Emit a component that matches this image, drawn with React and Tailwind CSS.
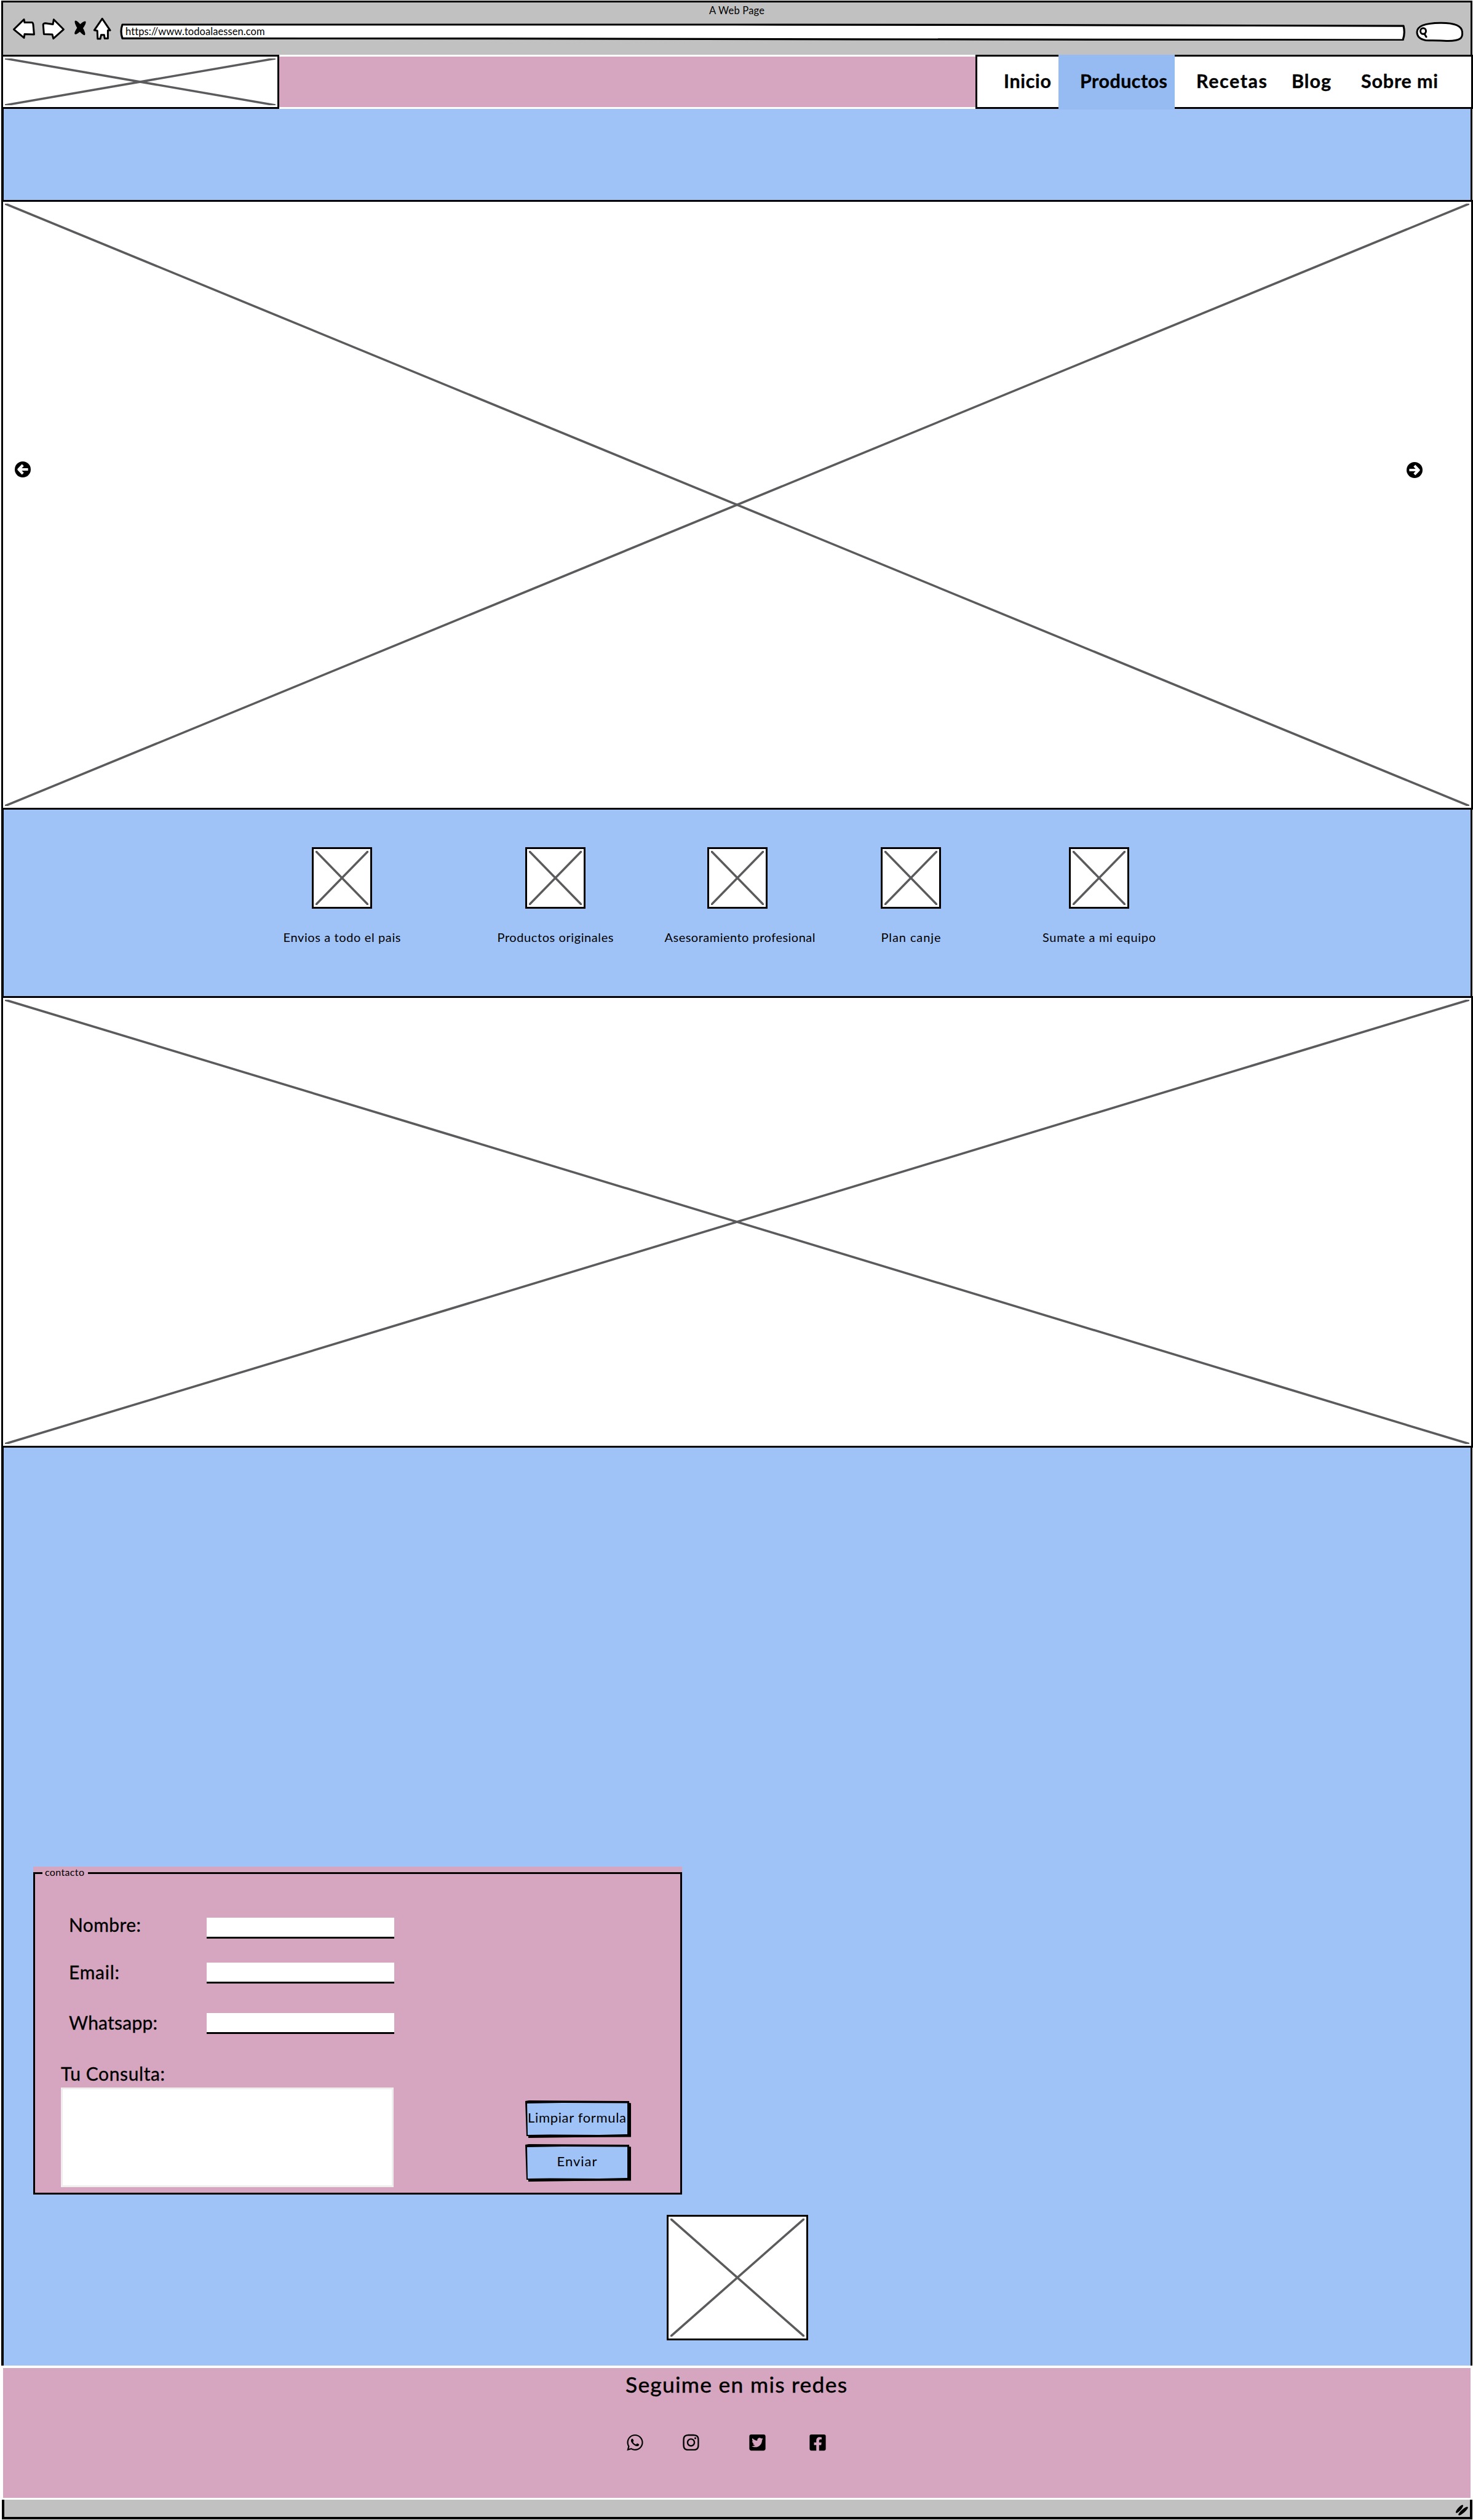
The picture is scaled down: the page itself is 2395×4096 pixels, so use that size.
import { useLayoutEffect, useRef, useState } from "react";
import { FaWhatsapp, FaInstagram, FaTwitterSquare, FaFacebookSquare } from "react-icons/fa";

/* A single line of text whose tracking is adjusted so that it spans `width`. */
function FitText({ width, className = "", children }) {
  const ref = useRef(null);
  const [spacing, setSpacing] = useState(0);
  useLayoutEffect(() => {
    const natural = ref.current.getBoundingClientRect().width;
    setSpacing((width - natural) / (children.length - 1));
  }, []);
  return (
    <span className={`block shrink-0 whitespace-nowrap leading-none ${className}`} style={{ width }}>
      <span ref={ref} className="inline-block" style={{ letterSpacing: spacing }}>
        {children}
      </span>
    </span>
  );
}

/* Bordered image placeholder with two diagonals. */
function Placeholder({ className = "", children }) {
  return (
    <div className={`relative shrink-0 border-[3px] border-black bg-white ${className}`}>
      <svg
        className="absolute left-[3px] top-[3px] h-[calc(100%-6px)] w-[calc(100%-6px)]"
        viewBox="0 0 100 100"
        preserveAspectRatio="none"
        stroke="#5b5b5d"
        strokeWidth="3.6"
      >
        <line x1="0" y1="0" x2="100" y2="100" vectorEffect="non-scaling-stroke" />
        <line x1="100" y1="0" x2="0" y2="100" vectorEffect="non-scaling-stroke" />
      </svg>
      {children}
    </div>
  );
}

function ArrowBadge({ className = "" }) {
  return (
    <svg className={`relative h-[26px] w-[26px] ${className}`} viewBox="0 0 124 124" fill="none">
      <circle cx="62" cy="62" r="62" fill="#000" />
      <path d="M21 62H86M61 29L93 62L61 95" stroke="#fff" strokeWidth="20" strokeLinejoin="round" />
    </svg>
  );
}

function BrowserBar() {
  return (
    <header className="ml-[2px] mr-px mt-px flex h-[88px] shrink-0 flex-col border-x-[3px] border-t-[3px] border-black bg-[#c1c1c1]">
      <FitText width={90} className="ml-[1148px] mt-[5px] text-[16.5px]">
        A Web Page
      </FitText>
      <div className="mt-[2.5px] flex items-start pl-[15px]">
        <svg className="h-[38px] w-[40px]" viewBox="0 0 40 38" fill="#fff" stroke="#000" strokeWidth="3" strokeLinejoin="round">
          <path d="M2.5 19.8L19 3.6L20 8.6L32 8.4Q33.6 8.6 34 12L35.4 27.9L20 27.5L19 33.4Z" />
        </svg>
        <svg className="ml-[6px] h-[38px] w-[40px]" viewBox="0 0 40 38" fill="#fff" stroke="#000" strokeWidth="3" strokeLinejoin="round">
          <path d="M4.2 12Q4.6 9.8 7.9 9.7L20 11.4L21.4 3.8L37.4 19.8L20.8 34.7L19 27.9L5.4 27.5Z" />
        </svg>
        <svg className="ml-[12px] h-[38px] w-[26px]" viewBox="0 0 26 38" fill="#000">
          <ellipse cx="12" cy="17.3" rx="14" ry="3.9" transform="rotate(56 12 17.3)" />
          <ellipse cx="12.4" cy="17.2" rx="13.500" ry="3.9" transform="rotate(-50 12.4 17.2)" />
        </svg>
        <svg className="ml-[6px] h-[38px] w-[32px]" viewBox="0 0 32 38" fill="#fff" stroke="#000" strokeWidth="3" strokeLinejoin="round">
          <path d="M16.2 2.4L29.1 21.3L25.4 21.3V34.5H20.2L19.3 28.7H14.4L13.1 35.1H8.8L8.2 22L3.3 21.1Z" />
        </svg>
        <div className="relative ml-[13px] h-[38px] w-[2092px]">
          <svg className="absolute inset-0 h-full w-full" viewBox="0 0 2092 38" fill="#fff" stroke="#000" strokeWidth="3.2" strokeLinejoin="round">
            <path d="M4 12L1000 12L1500 12.6L2087 14.2Q2090 26 2086 37L1200 35.8L600 34.6L4 34.4Q0 23 4 12Z" />
          </svg>
          <FitText width={226} className="relative ml-[9px] mt-[15px] text-[16.5px]">
            https://www.todoalaessen.com
          </FitText>
        </div>
        <svg className="ml-[15px] mt-[6px] h-[36px] w-[78px]" viewBox="0 0 78 36" fill="#fff" stroke="#000" strokeWidth="3">
          <path d="M2 18C2 10 10 3.5 40 3.2C66 3 75 9 75.5 18C76.5 27 74 33 50 32.5C35 31.5 24 32 16 31.5C8 30 2 26 2 18Z" />
          <ellipse cx="12" cy="16.5" rx="4.500" ry="4.800" fill="none" />
          <path d="M14 21L17 26" strokeLinecap="round" />
        </svg>
      </div>
    </header>
  );
}

function NavBar() {
  return (
    <nav className="flex h-[88px] shrink-0 items-stretch bg-white">
      <Placeholder className="ml-[2px] w-[452px]" />
      <div className="my-[3px] w-[1132px] bg-[#d6a5bf]" />
      <div className="relative flex w-[809px] items-start border-[3px] border-black bg-white pl-[43px] pt-[24px] text-[30.5px] font-bold [-webkit-text-stroke:0.35px_black]">
        <div className="absolute -bottom-[4px] -top-[3px] left-[132px] w-[189px] bg-[#95bbf2]" />
        <FitText width={77}>Inicio</FitText>
        <FitText width={142} className="relative ml-[47px]">
          Productos
        </FitText>
        <FitText width={115} className="ml-[47px]">
          Recetas
        </FitText>
        <FitText width={64} className="ml-[40px]">
          Blog
        </FitText>
        <FitText width={125} className="ml-[49px]">
          Sobre mi
        </FitText>
      </div>
    </nav>
  );
}

function Feature({ label, width, className = "", labelClass = "" }) {
  return (
    <div className={`flex w-[98px] flex-col items-center ${className}`}>
      <Placeholder className="h-[100px] w-[98px]" />
      <FitText width={width} className={`mt-[36px] text-[20px] ${labelClass}`}>
        {label}
      </FitText>
    </div>
  );
}

function Field({ label, width, className, labelClass }) {
  return (
    <label className={`flex h-[34px] items-start ${className}`}>
      <span className="block w-[223px]">
        <FitText width={width} className={`-ml-px [-webkit-text-stroke:0.35px_black] ${labelClass}`}>
          {label}
        </FitText>
      </span>
      <span className="block h-[34px] w-[305px] border-b-[3px] border-black bg-white" />
    </label>
  );
}

function SketchButton({ label, width, className = "" }) {
  return (
    <button className={`relative block h-[61px] w-[172px] ${className}`}>
      <svg className="absolute inset-0 h-full w-full" viewBox="0 0 172 61">
        <path d="M0 1L6 0L169 1V4L172 4.5V59.500L80 60L5 61V58H2Z" fill="#000" />
        <path d="M3 5L60 4L166 4.5V55L120 56L40 55.5L4 56Z" fill="#9fc3f7" />
      </svg>
      <span className="relative flex h-full w-[168px] justify-center pt-[17px]">
        <FitText width={width} className="text-[22px]">
          {label}
        </FitText>
      </span>
    </button>
  );
}

function ContactForm() {
  return (
    <form className="ml-[48px] flex h-[533px] w-[1055px] shrink-0 flex-col bg-[#d6a5bf] pt-[9px]">
      <div className="relative h-[524px] border-[3px] border-black">
        <div className="absolute -top-[9px] left-[12px] h-[14px] w-[74px] bg-[#d6a5bf] pl-[4px]">
          <FitText width={64} className="-mt-[2px] text-[16px]">
            contacto
          </FitText>
        </div>
        <Field label="Nombre:" width={117} className="ml-[56px] mt-[71px]" labelClass="-mt-[4px] text-[30px]" />
        <Field label="Email:" width={82} className="ml-[56px] mt-[39px]" labelClass="text-[30px]" />
        <Field label="Whatsapp:" width={144} className="ml-[56px] mt-[48px]" labelClass="text-[30px]" />
        <div className="flex items-start">
          <div className="ml-[42px] mt-[49px]">
            <FitText width={169} className="text-[30px] [-webkit-text-stroke:0.35px_black]">
              Tu Consulta:
            </FitText>
            <div className="mt-[8px] h-[162px] w-[541px] border-[3px] border-[#eeeeee] bg-white" />
          </div>
          <div className="ml-[214px] mt-[108px]">
            <SketchButton label="Limpiar formula" width={160} />
            <SketchButton label="Enviar" width={65} className="mt-[10px]" />
          </div>
        </div>
      </div>
    </form>
  );
}

export default function App() {
  return (
    <div className="flex h-[4096px] w-[2395px] flex-col overflow-hidden bg-white font-['Lato',sans-serif] text-black">
      <BrowserBar />
      <NavBar />
      <main className="ml-[2px] mr-px flex h-[3668px] shrink-0 flex-col border-l-[4px] border-r-[3px] border-black bg-[#9fc3f7]">
        <div className="h-[148px] shrink-0" />
        <Placeholder className="-ml-[4px] -mr-[4px] flex h-[991px] items-start justify-between pl-[19px] pr-[79px] pt-[422px]">
          <ArrowBadge className="rotate-180" />
          <ArrowBadge className="mt-[1px]" />
        </Placeholder>
        <section className="flex h-[303px] shrink-0 items-start pl-[501px] pt-[61px]">
          <Feature label="Envios a todo el pais" width={191} />
          <Feature label="Productos originales" width={189} className="ml-[249px]" />
          <Feature label="Asesoramiento profesional" width={245} className="ml-[198px]" labelClass="relative left-[4px]" />
          <Feature label="Plan canje" width={97} className="ml-[184px]" />
          <Feature label="Sumate a mi equipo" width={184} className="ml-[208px]" />
        </section>
        <Placeholder className="-ml-[4px] -mr-[4px] h-[734px]" />
        <section className="flex flex-col pt-[681px]">
          <ContactForm />
          <Placeholder className="ml-[1078px] mt-[33px] h-[204px] w-[230px]" />
        </section>
      </main>
      <footer className="ml-[5px] mr-[4px] mt-[4px] h-[211px] shrink-0 bg-[#d6a5bf]">
        <div className="pl-[1012px] pt-[9px]">
          <FitText width={360} className="text-[35.5px] [-webkit-text-stroke:0.5px_black]">
            Seguime en mis redes
          </FitText>
        </div>
        <div className="mt-[61px] flex pl-[1014px]">
          <FaWhatsapp className="h-[30px] w-[27px]" />
          <FaInstagram className="ml-[64px] h-[30px] w-[27px]" />
          <FaTwitterSquare className="ml-[81px] h-[30px] w-[27px]" />
          <FaFacebookSquare className="ml-[71px] h-[30px] w-[27px]" />
        </div>
      </footer>
      <div className="ml-[3px] mr-px mt-[3px] flex h-[32px] shrink-0 items-start justify-end border-x-[4px] border-b-[4px] border-black bg-[#c1c1c1]">
        <svg className="mr-[2px] mt-[7px] h-[20px] w-[24px]" viewBox="0 0 24 20" fill="#000">
          <ellipse cx="9" cy="8" rx="8.500" ry="2.600" transform="rotate(-48 9 8)" />
          <ellipse cx="15" cy="11.500" rx="10" ry="2.800" transform="rotate(-41 15 11.5)" />
        </svg>
      </div>
    </div>
  );
}
